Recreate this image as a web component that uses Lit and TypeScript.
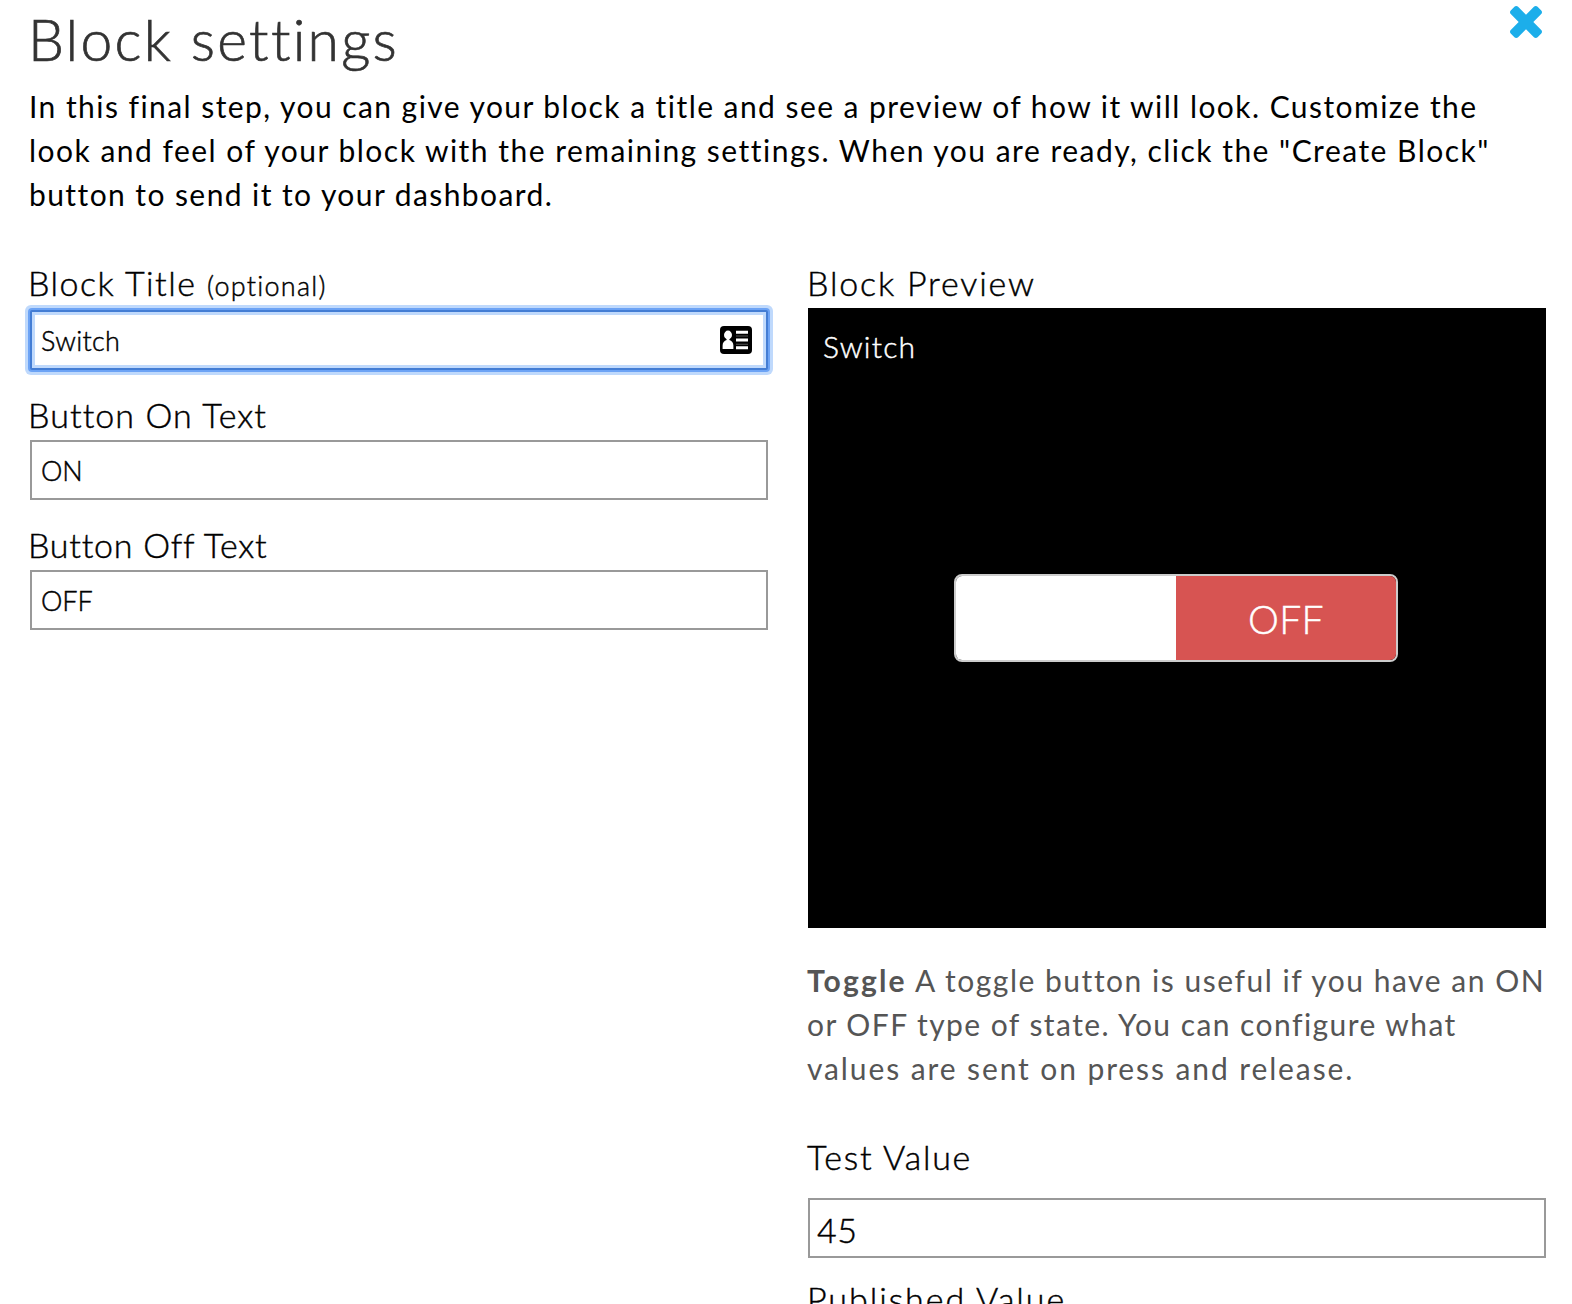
import { LitElement, html, css, nothing } from "lit";
import { customElement, property } from "lit/decorators.js";

/** A label with a bordered text box under it. */
@customElement("text-field")
class TextField extends LitElement {
  @property() label = "";
  @property() hint = "";
  @property() value = "";
  @property({ type: Boolean, reflect: true }) active = false;
  @property({ type: Boolean, reflect: true }) large = false;

  static styles = css`
    :host { display: flex; flex-direction: column; gap: 5px; }
    :host([active]) { gap: 7px; }
    :host([large]) { gap: 21px; }
    .label { height: 40px; line-height: 40px; margin-left: -2px; font-size: 34px; white-space: nowrap; letter-spacing: var(--label-spacing, 1.5px); }
    :host([large]) .label { margin-left: -1px; }
    .hint { font-size: 27px; letter-spacing: 1.25px; }
    .box { display: flex; align-items: center; box-sizing: border-box; height: 60px; border: 2px solid #999; padding: 0 14px 0 9px; background: #fff; }
    .input { flex: 1; min-width: 0; height: 56px; border: 0; padding: 0; outline: none; background: transparent; color: #000; font: inherit; font-size: 27px; letter-spacing: var(--value-spacing, 0); -webkit-text-stroke: inherit; }
    .icon { display: block; width: 32px; height: 28px; margin-bottom: 1px; }
    :host([active]) .box { border-color: #437dd4; box-shadow: 0 0 0 2px #6ca3f5, 0 0 0 5px #bfd9fc, inset 0 0 0 3px #bfd9fc; border-radius: 2px; }
    :host([large]) .box { padding-left: 7px; }
    :host([large]) .input { font-size: 34px; padding-top: 2px; box-sizing: border-box; }
  `;

  render() {
    return html`
      <label class="label">${this.label}${this.hint ? html` <span class="hint">${this.hint}</span>` : nothing}</label>
      <div class="box">
        <input class="input" .value=${this.value} />
        ${this.active
          ? html`<svg class="icon" viewBox="0 0 32 28">
              <rect width="32" height="28" rx="4" />
              <ellipse cx="8" cy="9" rx="4" ry="4.4" fill="#fff" />
              <path d="M6.600 12h2.800v2c2.300.7 4 2.600 4 5.500v3.600H2.600v-3.600c0-2.900 1.700-4.800 4-5.500z" fill="#fff" />
              <path d="M16 4.800h12v3H16zM16 12.600h12v2.800H16zM16 20.200h12v3H16z" fill="#fff" />
              <path d="M16 9.500h12v1H16zM16 17.700h12v1H16z" fill="#555" />
            </svg>`
          : nothing}
      </div>
    `;
  }
}

/** The dashboard tile with its two-state switch. */
@customElement("block-preview")
class BlockPreview extends LitElement {
  static styles = css`
    :host { display: flex; flex-direction: column; box-sizing: border-box; height: 620px; padding: 16px 17px 16px 15px; background: #000; color: #fff; }
    .name { height: 44px; line-height: 44px; font-size: 30px; letter-spacing: 1.2px; }
    .toggle { display: flex; align-self: center; box-sizing: border-box; width: 444px; height: 88px; margin-top: 206px; border: 2px solid #ccc; border-radius: 8px; overflow: hidden; }
    .half { flex: 1; }
    .on { background: #fff; }
    .off { background: #d75452; line-height: 86px; font-size: 39px; letter-spacing: 0.36px; text-align: center; }
  `;

  render() {
    return html`
      <div class="name">Switch</div>
      <div class="toggle"><div class="half on"></div><div class="half off">OFF</div></div>
    `;
  }
}

@customElement("app-root")
class AppRoot extends LitElement {
  static styles = css`
    :host { display: block; box-sizing: border-box; height: 1304px; padding: 0 26px 0 30px; overflow: hidden; background: #fff; color: #000; font-family: Lato, "Liberation Sans", sans-serif; font-weight: 300; -webkit-text-stroke: 0.45px currentColor; }
    .head { display: flex; justify-content: space-between; align-items: flex-start; height: 76px; }
    .title { margin: 1px 0 0 -2px; line-height: 76px; font-size: 57px; font-weight: 300; letter-spacing: 2.25px; color: #333; -webkit-text-stroke-width: 0.7px; }
    .close { display: block; width: 32px; height: 32px; margin: 6px 4px 0 0; fill: #1caeea; }
    .intro { margin: 8px 0 0 -1px; }
    .text { line-height: 44px; font-size: 30px; font-weight: 400; -webkit-text-stroke-width: 0; }
    .line { display: block; white-space: nowrap; letter-spacing: 1.44px; }
    .i2 { letter-spacing: 1.48px; }
    .i3 { letter-spacing: 1.42px; }
    .columns { display: grid; grid-template-columns: 738px 738px; column-gap: 40px; margin-top: 47px; }
    .col { display: flex; flex-direction: column; }
    .left { gap: 25px; }
    .heading { height: 40px; line-height: 40px; margin-bottom: 5px; font-size: 34px; letter-spacing: 1.83px; margin-left: -1px; }
    .about { margin: 30px 0 47px -1px; color: #555; }
    .a1 { letter-spacing: 1.52px; }
    .a3 { letter-spacing: 1.9px; }
    .bold { font-weight: 700; letter-spacing: 2.2px; }
    .f-title { --label-spacing: 1.48px; --value-spacing: 0.3px; }
    .f-on { --label-spacing: 1.08px; --value-spacing: 0; }
    .f-off { --label-spacing: 0.75px; --value-spacing: -0.1px; }
    .f-test { --label-spacing: 1.75px; --value-spacing: 0.6px; }
    .f-pub { --label-spacing: 1.95px; margin-top: 21px; }
  `;

  render() {
    return html`
      <header class="head">
        <h1 class="title">Block settings</h1>
        <svg class="close" viewBox="302 366 1188 1188">
          <path d="M1490 1322q0 40-28 68l-136 136q-28 28-68 28t-68-28l-294-294-294 294q-28 28-68 28t-68-28l-136-136q-28-28-28-68t28-68l294-294-294-294q-28-28-28-68t28-68l136-136q28-28 68-28t68 28l294 294 294-294q28-28 68-28t68 28l136 136q28 28 28 68t-28 68l-294 294 294 294q28 28 28 68z" />
        </svg>
      </header>
      <p class="intro text">
        <span class="line">In this final step, you can give your block a title and see a preview of how it will look. Customize the</span>
        <span class="line i2">look and feel of your block with the remaining settings. When you are ready, click the "Create Block"</span>
        <span class="line i3">button to send it to your dashboard.</span>
      </p>
      <div class="columns">
        <div class="col left">
          <text-field class="f-title" label="Block Title" hint="(optional)" value="Switch" active></text-field>
          <text-field class="f-on" label="Button On Text" value="ON"></text-field>
          <text-field class="f-off" label="Button Off Text" value="OFF"></text-field>
        </div>
        <div class="col">
          <div class="heading">Block Preview</div>
          <block-preview></block-preview>
          <div class="about text">
            <span class="line a1"><b class="bold">Toggle</b> A toggle button is useful if you have an ON</span>
            <span class="line">or OFF type of state. You can configure what</span>
            <span class="line a3">values are sent on press and release.</span>
          </div>
          <text-field class="f-test" label="Test Value" value="45" large></text-field>
          <text-field class="f-pub" label="Published Value" large></text-field>
        </div>
      </div>
    `;
  }
}
